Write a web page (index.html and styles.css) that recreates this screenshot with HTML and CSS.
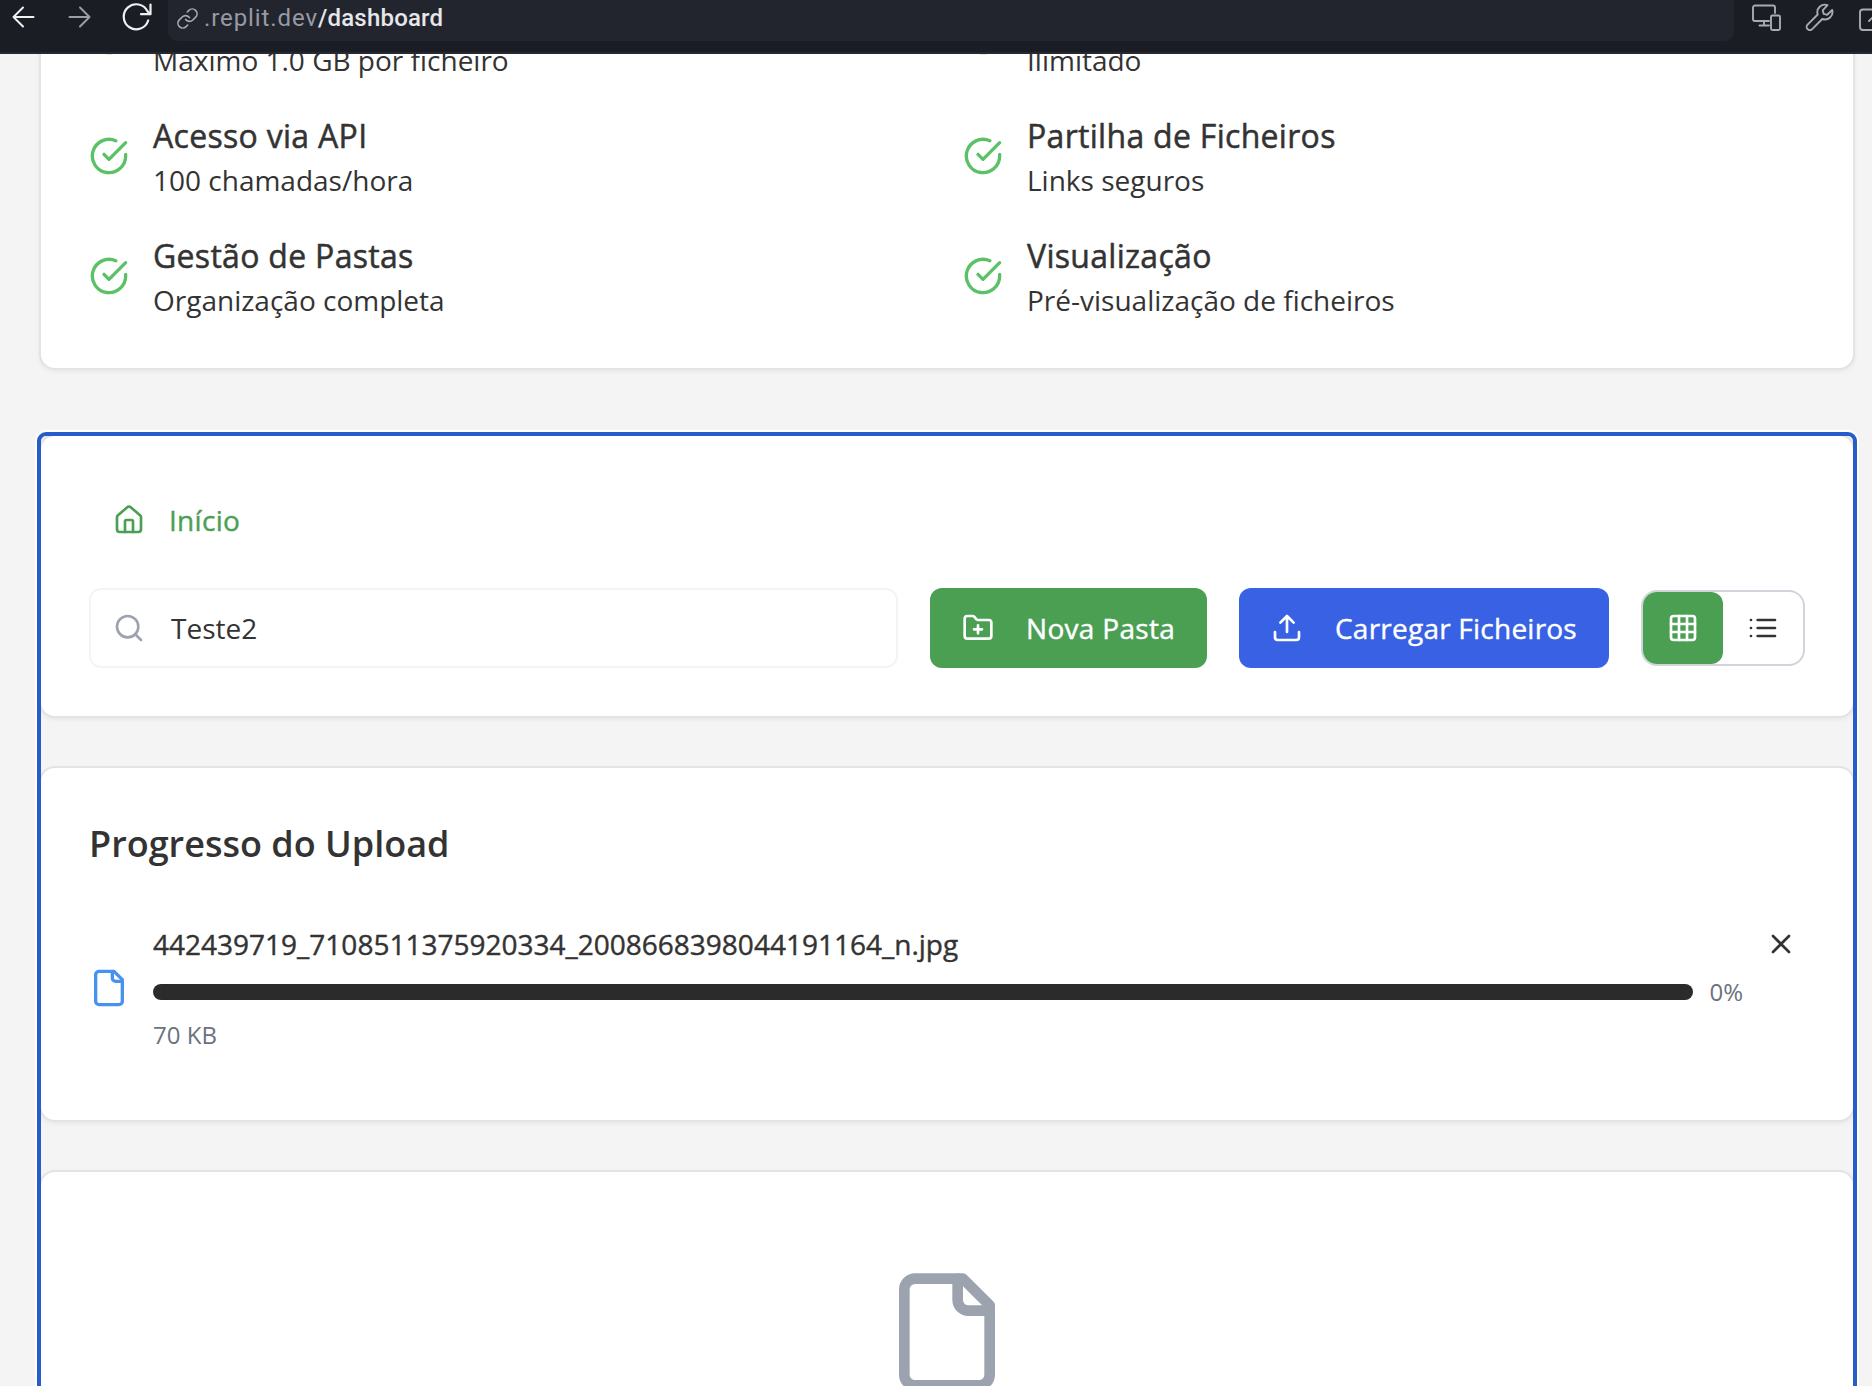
FILE: index.html
```html
<!DOCTYPE html>
<html lang="pt">
<head>
<meta charset="utf-8">
<title>Dashboard</title>
<link rel="stylesheet" href="styles.css">
</head>
<body>
<svg class="sprite" aria-hidden="true">
  <symbol id="check" viewBox="0 0 24 24"><path d="M22 11.08V12a10 10 0 1 1-5.93-9.14"/><path d="M22 4 12 14.01l-3-3"/></symbol>
  <symbol id="home" viewBox="0 0 24 24"><path d="M15 21v-8a1 1 0 0 0-1-1h-4a1 1 0 0 0-1 1v8"/><path d="M3 10a2 2 0 0 1 .709-1.528l7-5.999a2 2 0 0 1 2.582 0l7 5.999A2 2 0 0 1 21 10v9a2 2 0 0 1-2 2H5a2 2 0 0 1-2-2z"/></symbol>
  <symbol id="search" viewBox="0 0 24 24"><circle cx="11" cy="11" r="8"/><path d="m21 21-4.3-4.3"/></symbol>
  <symbol id="folder-plus" viewBox="0 0 24 24"><path d="M12 10v6M9 13h6"/><path d="M20 20a2 2 0 0 0 2-2V8a2 2 0 0 0-2-2h-7.9a2 2 0 0 1-1.69-.9L9.6 3.9A2 2 0 0 0 7.93 3H4a2 2 0 0 0-2 2v13a2 2 0 0 0 2 2Z"/></symbol>
  <symbol id="upload" viewBox="0 0 24 24"><path d="M21 15v4a2 2 0 0 1-2 2H5a2 2 0 0 1-2-2v-4"/><path d="m17 8-5-5-5 5M12 3v12"/></symbol>
  <symbol id="grid" viewBox="0 0 24 24"><rect x="3" y="3" width="18" height="18" rx="2"/><path d="M3 9h18M3 15h18M9 3v18M15 3v18"/></symbol>
  <symbol id="list" viewBox="0 0 24 24"><path d="M3 12h.01M3 18h.01M3 6h.01M8 12h13M8 18h13M8 6h13"/></symbol>
  <symbol id="file" viewBox="0 0 24 24"><path d="M15 2H6a2 2 0 0 0-2 2v16a2 2 0 0 0 2 2h12a2 2 0 0 0 2-2V7Z"/><path d="M14 2v4a2 2 0 0 0 2 2h4"/></symbol>
  <symbol id="close" viewBox="0 0 24 24"><path d="M18 6 6 18M6 6l12 12"/></symbol>
</svg>

<header class="toolbar">
  <nav class="toolbar-nav">
    <svg class="nav-icon" viewBox="0 0 24 24"><path d="M22.500 12H2.500M12 2.500 2.500 12l9.500 9.500"/></svg>
    <svg class="nav-icon dim" viewBox="0 0 24 24"><path d="M1.500 12h20M12 2.500 21.500 12 12 21.500"/></svg>
    <svg class="nav-icon reload" viewBox="0 0 30 28"><path d="M26.200 17.500A12.500 12.500 0 1 1 25.500 8.300L28 11"/><path d="M28.500 1.500V11.200H19"/></svg>
  </nav>
  <div class="address">
    <svg class="link-icon" viewBox="0 0 24 24"><path d="M10 13a5 5 0 0 0 7.540.54l3-3a5 5 0 0 0-7.070-7.070l-1.720 1.710"/><path d="M14 11a5 5 0 0 0-7.540-.54l-3 3a5 5 0 0 0 7.070 7.070l1.710-1.710"/></svg>
    <span class="host">.replit.dev</span><span class="path">/dashboard</span>
  </div>
  <div class="toolbar-tools">
    <svg class="tool" viewBox="0 0 30 30"><path d="M23 12V6.500a2 2 0 0 0-2-2H3a2 2 0 0 0-2 2V18a2 2 0 0 0 2 2h14M12 20v4.500M7.500 24.500H17"/><rect x="19" y="14.500" width="9" height="14.500" rx="1.500"/></svg>
    <svg class="tool" viewBox="0 0 30 30"><path d="M22.500 4.200a7.500 7.500 0 0 0-9.800 9.300L2.600 23.600a3.200 3.200 0 0 0 4.600 4.600L17.300 18a7.500 7.500 0 0 0 9.900-9l-5 4.800-3.500-.900-1-3.600z"/></svg>
    <svg class="tool" viewBox="0 0 30 30"><path d="M15 8.500H5a3 3 0 0 0-3 3V26a3 3 0 0 0 3 3h15a3 3 0 0 0 3-3V17M11 20 26 5M18 4h9v9"/></svg>
  </div>
</header>

<main class="page">
  <section class="card plan">
    <div class="feature"><svg class="icon icon-md"><use href="#check"/></svg><div><h3></h3><p>Máximo 1.0 GB por ficheiro</p></div></div>
    <div class="feature"><svg class="icon icon-md"><use href="#check"/></svg><div><h3></h3><p>Ilimitado</p></div></div>
    <div class="feature"><svg class="icon icon-md"><use href="#check"/></svg><div><h3>Acesso via API</h3><p>100 chamadas/hora</p></div></div>
    <div class="feature"><svg class="icon icon-md"><use href="#check"/></svg><div><h3>Partilha de Ficheiros</h3><p>Links seguros</p></div></div>
    <div class="feature"><svg class="icon icon-md"><use href="#check"/></svg><div><h3>Gestão de Pastas</h3><p>Organização completa</p></div></div>
    <div class="feature"><svg class="icon icon-md"><use href="#check"/></svg><div><h3>Visualização</h3><p>Pré-visualização de ficheiros</p></div></div>
  </section>

  <section class="files">
    <div class="card">
      <div class="crumb"><svg class="icon"><use href="#home"/></svg><span>Início</span></div>
      <div class="actions">
        <div class="search"><svg class="icon"><use href="#search"/></svg><span>Teste2</span></div>
        <button class="btn btn-green"><svg class="icon"><use href="#folder-plus"/></svg><span>Nova Pasta</span></button>
        <button class="btn btn-blue"><svg class="icon"><use href="#upload"/></svg><span>Carregar Ficheiros</span></button>
        <div class="toggle">
          <button class="view active"><svg class="icon"><use href="#grid"/></svg></button>
          <button class="view"><svg class="icon"><use href="#list"/></svg></button>
        </div>
      </div>
    </div>

    <div class="card">
      <h2>Progresso do Upload</h2>
      <div class="upload">
        <svg class="icon icon-md upload-file"><use href="#file"/></svg>
        <div class="upload-info">
          <p class="upload-name">442439719_7108511375920334_2008668398044191164_n.jpg</p>
          <div class="upload-progress"><div class="bar"></div><span>0%</span></div>
          <p class="upload-size">70 KB</p>
        </div>
        <button class="dismiss"><svg class="icon"><use href="#close"/></svg></button>
      </div>
    </div>

    <div class="card empty">
      <svg class="icon icon-xl"><use href="#file"/></svg>
    </div>
  </section>
</main>
</body>
</html>
```
FILE: styles.css
```css
* { box-sizing: border-box; margin: 0; padding: 0; }

body {
  display: flex;
  flex-direction: column;
  height: 1386px;
  overflow: hidden;
  background: #f4f4f4;
  color: #333;
  font: 400 28px/40px "Open Sans", sans-serif;
}

button { border: 0; background: none; font: inherit; color: inherit; }
.sprite { display: none; }

.icon {
  flex: none;
  width: 32px;
  height: 32px;
  fill: none;
  stroke: currentColor;
  stroke-width: 2;
  stroke-linecap: round;
  stroke-linejoin: round;
}
.icon-md { width: 40px; height: 40px; }
.icon-xl { width: 128px; height: 128px; }

/* Browser toolbar */
.toolbar {
  flex: none;
  display: flex;
  height: 54px;
  overflow: hidden;
  background: #1b1d25;
  border-bottom: 2px solid #272832;
}
.toolbar svg { flex: none; fill: none; stroke: #a9abb3; stroke-width: 1.9; stroke-linecap: round; stroke-linejoin: round; }
.toolbar-nav { flex: none; display: flex; align-items: flex-start; gap: 33px; width: 168px; padding: 5px 0 0 11px; }
.toolbar .nav-icon { width: 24px; height: 24px; stroke: #f0f0f2; stroke-width: 2; }
.toolbar .nav-icon.dim { stroke: #9c9ea6; }
.toolbar .nav-icon.reload { width: 30px; height: 28px; margin: -2px 0 0 -3px; stroke-width: 2.2; }
.address {
  flex: none;
  display: flex;
  align-items: center;
  width: 1566px;
  height: 41px;
  padding: 0 0 5px 8px;
  background: #23252e;
  border-radius: 0 0 9px 9px;
  font: 500 24px/36px Roboto, sans-serif;
}
.toolbar .link-icon { width: 23px; height: 23px; margin-right: 5px; stroke-width: 1.7; }
.host { color: #989aa3; letter-spacing: 0.9px; font-weight: 400; }
.path { color: #e6e7ea; letter-spacing: 0.2px; }
.toolbar-tools { flex: none; display: flex; gap: 23px; padding: 1px 0 0 18px; }
.tool { width: 30px; height: 30px; }

/* Page */
.page { flex: 1; min-height: 0; overflow: hidden; padding: 0 17px 0 39px; }
.card {
  padding: 48px;
  background: #fff;
  border: 2px solid #e3e3e3;
  border-radius: 16px;
  box-shadow: 0 2px 4px rgba(0, 0, 0, 0.05);
}

/* The feature list is scrolled partly under the toolbar */
.plan {
  display: grid;
  grid-template-columns: 1fr 1fr;
  gap: 32px;
  margin-top: -112px;
}
.feature { display: flex; align-items: center; gap: 24px; }
.feature .icon { color: #5bc166; }
h3 { min-height: 48px; font-size: 32px; line-height: 48px; font-weight: 500; letter-spacing: 0.3px; -webkit-text-stroke: 0.5px; }

.files {
  display: flex;
  flex-direction: column;
  gap: 48px;
  margin-top: 64px;
  border-radius: 7px;
  outline: 4px solid #275dc8;
  outline-offset: -2px;
  box-shadow: 0 0 0 4px #fff;
  background: #f4f4f4;
}

.crumb { display: flex; align-items: center; gap: 24px; height: 72px; padding: 0 24px; margin-bottom: 32px; color: #4b9f53; font-weight: 500; letter-spacing: 0.3px; -webkit-text-stroke: 0.4px; }
.actions { display: flex; align-items: center; gap: 32px; }
.search {
  flex: 1;
  display: flex;
  align-items: center;
  gap: 26px;
  height: 80px;
  padding: 0 22px;
  border: 2px solid #f4f4f4;
  border-radius: 12px;
}
.search .icon { color: #9ca3af; }
.btn { display: flex; align-items: center; gap: 32px; height: 80px; padding: 0 0 0 32px; border-radius: 12px; color: #fff; font-weight: 500; white-space: nowrap; -webkit-text-stroke: 0.4px; }
.btn-green { width: 277px; background: #4b9f53; letter-spacing: 0.3px; }
.btn-blue { width: 370px; background: #3862e3; letter-spacing: 0.23px; }
.toggle { display: flex; border: 2px solid #d1d5db; border-radius: 16px; }
.view { display: flex; align-items: center; justify-content: center; width: 80px; height: 72px; border-radius: 12px; }
.view.active { background: #4b9f53; color: #fff; border-radius: 14px 12px 12px 14px; }

h2 { font-size: 36px; line-height: 56px; font-weight: 600; margin-bottom: 32px; }
.upload { display: flex; align-items: center; height: 168px; }
.upload-file { color: #4792ee; margin-right: 24px; }
.upload-info { flex: 1; height: 128px; }
.upload-name { font-weight: 500; -webkit-text-stroke: 0.4px; }
.upload-progress { display: flex; align-items: center; gap: 16px; height: 32px; margin: 12px 0 11px; }
.bar { flex: 1; height: 16px; border-radius: 8px; background: #2b2b2b; }
.upload-progress span, .upload-size { font-size: 24px; line-height: 32px; color: #6b7280; }
.dismiss { display: flex; align-items: center; justify-content: center; align-self: flex-start; width: 48px; height: 48px; margin: 16px 0 0 14px; }

.empty { display: flex; justify-content: center; height: 500px; padding-top: 96px; color: #9ca3af; }
```
